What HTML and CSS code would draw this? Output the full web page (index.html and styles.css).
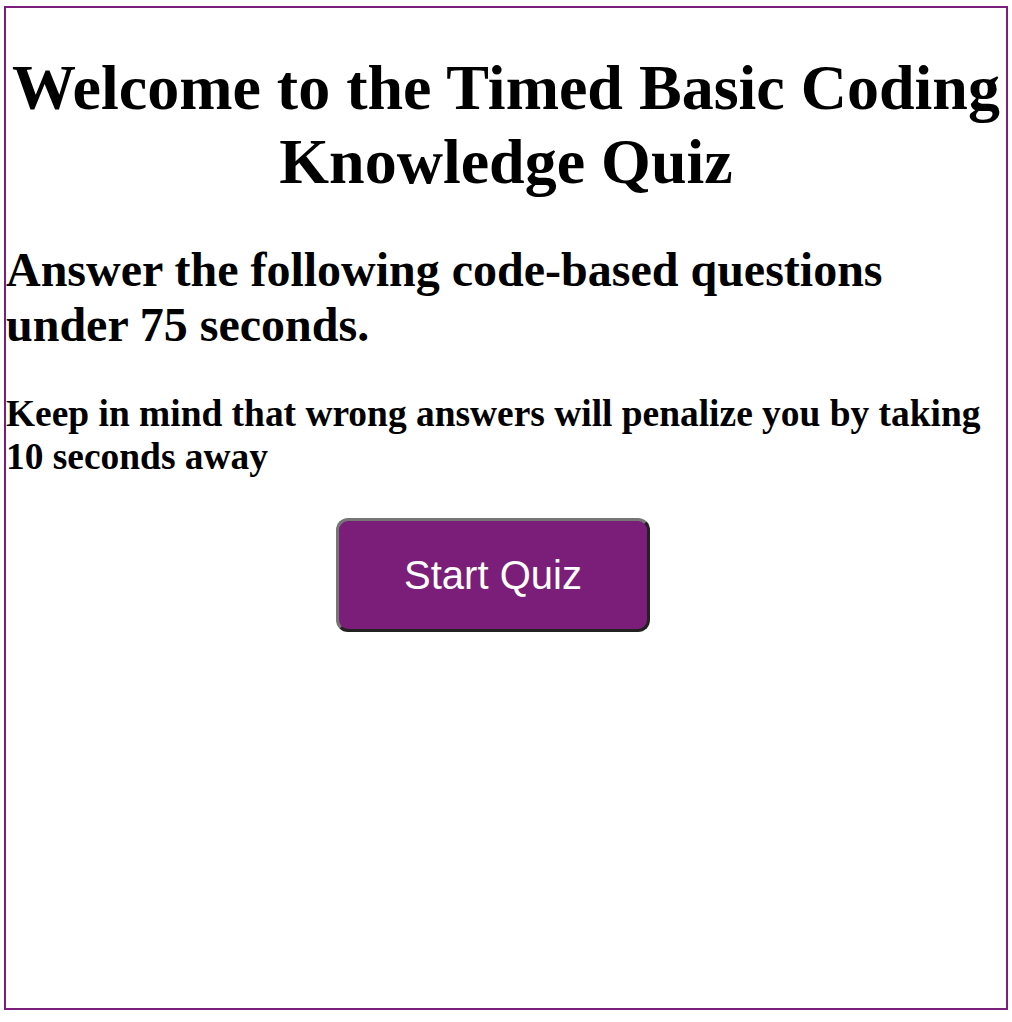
FILE: index.html
```html
<!DOCTYPE html>
<html lang="en">
<head>
<meta charset="utf-8">
<title>Timed Coding Quiz</title>
<link rel="stylesheet" href="styles.css">
</head>
<body>
<main class="quiz">
  <h1 class="title">Welcome to the Timed Basic Coding Knowledge Quiz</h1>
  <h2 class="intro">Answer the following code-based questions under 75 seconds.</h2>
  <h3 class="note">Keep in mind that wrong answers will penalize you by taking 10 seconds away</h3>
  <div class="actions">
    <button class="start" type="button">Start Quiz</button>
  </div>
</main>
</body>
</html>
```

FILE: styles.css
```css
html, body {
  margin: 0;
  padding: 0;
  background: #ffffff;
}

body {
  font-family: "Liberation Serif", "Times New Roman", serif;
  color: #000000;
}

.quiz {
  margin: 6px 4px;
  border: 2px solid #7b1f7c;
  height: 1000px;
  overflow: hidden;
}

.title {
  font-size: 64px;
  font-weight: bold;
  text-align: center;
  margin: 0.67em 0;
}

.intro {
  font-size: 48px;
  font-weight: bold;
  margin: 0.83em 0;
}

.note {
  font-size: 37.44px;
  font-weight: bold;
  margin: 1em 0;
}

.actions {
  display: flex;
  padding-left: 330px;
  padding-top: 3px;
}

.start {
  width: 314px;
  height: 114px;
  border: 3px solid;
  border-color: #767676 #222222 #222222 #767676;
  border-radius: 12px;
  background: #7a1e7a;
  color: #ffffff;
  font-family: "Liberation Sans", Arial, sans-serif;
  font-size: 40px;
  padding: 0;
}
```
